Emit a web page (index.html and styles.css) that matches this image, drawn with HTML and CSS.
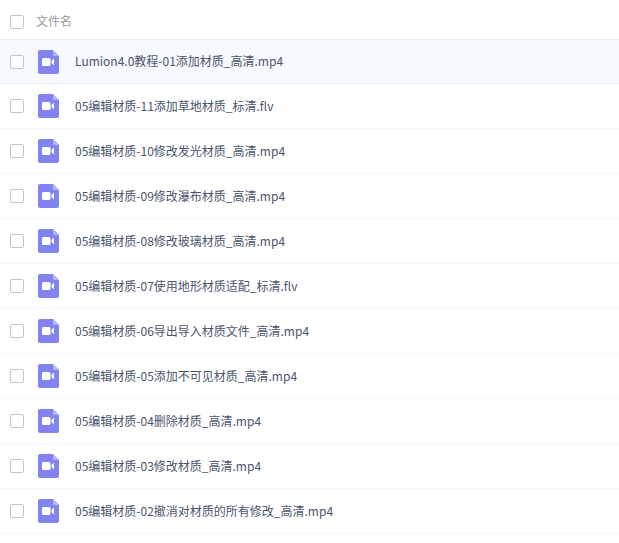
FILE: index.html
```html
<!DOCTYPE html>
<html lang="zh">
<head>
<meta charset="utf-8">
<title>文件名</title>
<link rel="stylesheet" href="styles.css">
</head>
<body>
<svg class="defs" width="0" height="0" aria-hidden="true">
  <symbol id="video" viewBox="0 0 21 24">
    <path d="M2 0H15L21 6V22a2 2 0 0 1-2 2H2a2 2 0 0 1-2-2V2a2 2 0 0 1 2-2Z" fill="#8183f1"/>
    <path d="M15 0L21 6H16.500a1.500 1.500 0 0 1-1.500-1.500Z" fill="#b4b5f7"/>
    <rect x="4" y="8" width="8.500" height="8" rx="1.500" fill="#fff"/>
    <path d="M13.500 11L16 8.500V15.500L13.500 13Z" fill="#fff"/>
  </symbol>
</svg>
<div class="list">
  <div class="head"><span class="check"></span><span class="head-label">文件名</span></div>
  <div class="row selected"><span class="check"></span><svg class="icon"><use href="#video"/></svg><span class="name">Lumion4.0教程-01添加材质_高清.mp4</span></div>
  <div class="row"><span class="check"></span><svg class="icon"><use href="#video"/></svg><span class="name">05编辑材质-11添加草地材质_标清.flv</span></div>
  <div class="row"><span class="check"></span><svg class="icon"><use href="#video"/></svg><span class="name">05编辑材质-10修改发光材质_高清.mp4</span></div>
  <div class="row"><span class="check"></span><svg class="icon"><use href="#video"/></svg><span class="name">05编辑材质-09修改瀑布材质_高清.mp4</span></div>
  <div class="row"><span class="check"></span><svg class="icon"><use href="#video"/></svg><span class="name">05编辑材质-08修改玻璃材质_高清.mp4</span></div>
  <div class="row"><span class="check"></span><svg class="icon"><use href="#video"/></svg><span class="name">05编辑材质-07使用地形材质适配_标清.flv</span></div>
  <div class="row"><span class="check"></span><svg class="icon"><use href="#video"/></svg><span class="name">05编辑材质-06导出导入材质文件_高清.mp4</span></div>
  <div class="row"><span class="check"></span><svg class="icon"><use href="#video"/></svg><span class="name">05编辑材质-05添加不可见材质_高清.mp4</span></div>
  <div class="row"><span class="check"></span><svg class="icon"><use href="#video"/></svg><span class="name">05编辑材质-04删除材质_高清.mp4</span></div>
  <div class="row"><span class="check"></span><svg class="icon"><use href="#video"/></svg><span class="name">05编辑材质-03修改材质_高清.mp4</span></div>
  <div class="row"><span class="check"></span><svg class="icon"><use href="#video"/></svg><span class="name">05编辑材质-02撤消对材质的所有修改_高清.mp4</span></div>
</div>
</body>
</html>
```
FILE: styles.css
```css
html, body {
  margin: 0;
  padding: 0;
  background: #fff;
}
body {
  font-family: "Noto Sans CJK SC", "Noto Sans", sans-serif;
  font-size: 12px;
  overflow: hidden;
}
.defs {
  position: absolute;
}
.list {
  display: flex;
  flex-direction: column;
}
.head, .row {
  display: flex;
  align-items: center;
  box-sizing: border-box;
  padding-left: 10px;
}
.head {
  height: 40px;
  padding-top: 5px;
  border-bottom: 1px solid #e6edf6;
}
.head-label {
  margin-left: 12px;
  margin-bottom: 4px;
  color: #9a9a9a;
}
.row {
  height: 45px;
  border-bottom: 1px solid #f2f5fb;
}
.row.selected {
  height: 44px;
  background: #f6f9fd;
  border-bottom-color: #e2ebf7;
}
.check {
  flex: none;
  box-sizing: border-box;
  width: 14px;
  height: 14px;
  border: 1px solid #bcc7d6;
  border-radius: 2px;
  background: #fff;
}
.icon {
  flex: none;
  width: 21px;
  height: 24px;
  margin-left: 14px;
}
.name {
  margin-left: 16px;
  margin-bottom: 2px;
  color: #4a556d;
  white-space: nowrap;
}
```
